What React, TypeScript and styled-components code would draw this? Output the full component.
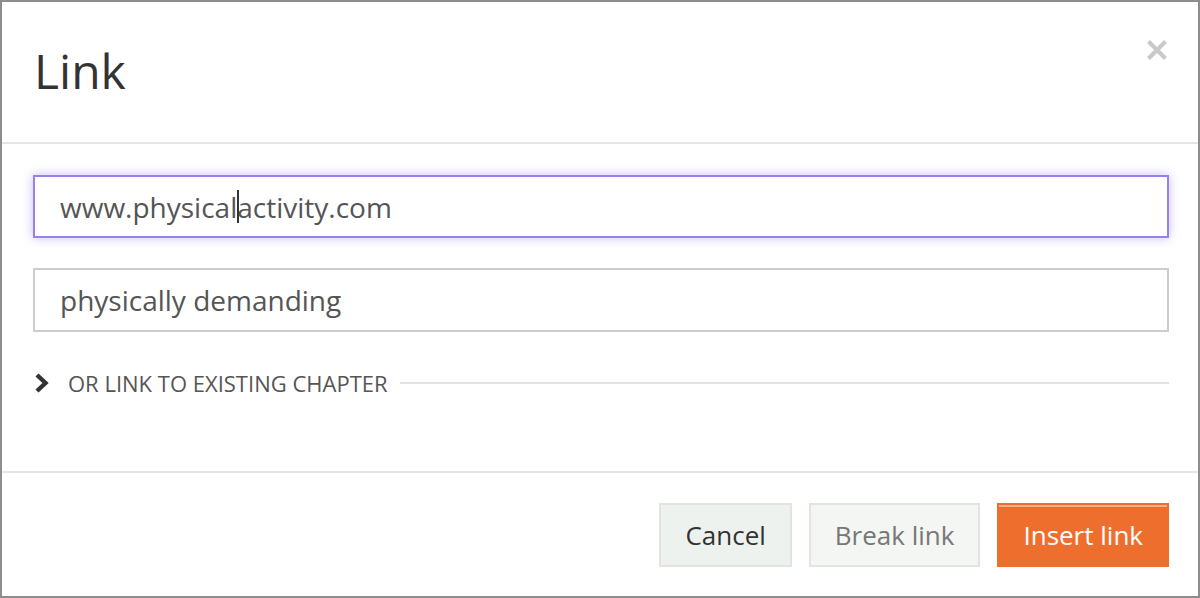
import React from "react";
import styled, { createGlobalStyle } from "styled-components";

const Global = createGlobalStyle`
  html, body { margin: 0; padding: 0; background: #8d8d8d; }
  body { font-family: "Open Sans", "Liberation Sans", sans-serif; }
  * { box-sizing: border-box; }
`;

const Modal = styled.div`
  margin: 2px 2px 0 2px;
  width: 1196px;
  height: 594px;
  background: #ffffff;
  display: flex;
  flex-direction: column;
`;

const Header = styled.div`
  height: 142px;
  border-bottom: 2px solid #e5e5e5;
  display: flex;
  align-items: center;
  justify-content: space-between;
  padding: 0 31px 0 32px;
`;

const Title = styled.h1`
  margin: 0;
  font-size: 48px;
  font-weight: 400;
  color: #333333;
  line-height: 1;
  padding-bottom: 2px;
`;

const Close = styled.button`
  border: none;
  background: none;
  padding: 0;
  width: 20px;
  height: 20px;
  align-self: flex-start;
  margin-top: 38px;
  cursor: pointer;
  display: flex;
`;

const Body = styled.div`
  flex: 1;
  padding: 31px 29px 0 31px;
  display: flex;
  flex-direction: column;
`;

const FieldWrap = styled.div`
  position: relative;
  margin-bottom: 30px;
`;

const Caret = styled.span`
  position: absolute;
  left: 204px;
  top: 15px;
  width: 2px;
  height: 33px;
  background: #333333;
  pointer-events: none;
`;

const Field = styled.input<{ $focused?: boolean }>`
  display: block;
  width: 100%;
  height: ${(p) => (p.$focused ? "63px" : "64px")};
  border: 2px solid ${(p) => (p.$focused ? "#9a80ee" : "#cccccc")};
  box-shadow: ${(p) => (p.$focused ? "0 0 10px rgba(140, 110, 240, 0.45)" : "none")};
  outline: none;
  padding: 0 25px;
  font-family: "Open Sans", "Liberation Sans", sans-serif;
  font-size: 28px;
  color: #555555;
  background: #fff;
  caret-color: transparent;
`;

const Toggle = styled.div`
  display: flex;
  align-items: center;
  gap: 18px;
  margin-top: 6px;
  padding-left: 1px;
`;

const ToggleLabel = styled.span`
  font-size: 22px;
  color: #555555;
  text-transform: uppercase;
  white-space: nowrap;
`;

const Rule = styled.div`
  flex: 1;
  height: 2px;
  background: #e2e2e2;
  margin-left: -6px;
`;

const Footer = styled.div`
  height: 125px;
  border-top: 2px solid #e5e5e5;
  display: flex;
  justify-content: flex-end;
  align-items: flex-start;
  padding: 30px 29px 0 0;
  gap: 17px;
`;

const Btn = styled.button<{ $variant: "default" | "muted" | "primary" }>`
  height: 64px;
  padding: 0 24px;
  font-family: "Open Sans", "Liberation Sans", sans-serif;
  font-size: 26px;
  cursor: pointer;
  border: 2px solid
    ${(p) => (p.$variant === "primary" ? "#ee6e2e" : "#e2e4e2")};
  background: ${(p) =>
    p.$variant === "primary" ? "#ee6e2e" : p.$variant === "muted" ? "#f3f6f3" : "#eef2ee"};
  color: ${(p) =>
    p.$variant === "primary" ? "#ffffff" : p.$variant === "muted" ? "#777777" : "#333333"};
  box-shadow: ${(p) =>
    p.$variant === "primary" ? "inset 0 2px 0 rgba(255,255,255,0.45)" : "none"};
`;

export default function App() {
  return (
    <>
      <Global />
      <Modal>
        <Header>
          <Title>Link</Title>
          <Close aria-label="Close">
            <svg width="20" height="20" viewBox="0 0 20 20">
              <path d="M3 3 L17 17 M17 3 L3 17" stroke="#c9c9c9" strokeWidth="4.2" strokeLinecap="square" />
            </svg>
          </Close>
        </Header>
        <Body>
          <FieldWrap>
            <Field $focused defaultValue="www.physicalactivity.com" />
            <Caret />
          </FieldWrap>
          <FieldWrap>
            <Field defaultValue="physically demanding" />
          </FieldWrap>
          <Toggle>
            <svg width="16" height="22" viewBox="0 0 16 22">
              <path d="M3 3 L11.5 11 L3 19" stroke="#333" strokeWidth="4.4" fill="none" />
            </svg>
            <ToggleLabel>Or link to existing chapter</ToggleLabel>
            <Rule />
          </Toggle>
        </Body>
        <Footer>
          <Btn $variant="default">Cancel</Btn>
          <Btn $variant="muted">Break link</Btn>
          <Btn $variant="primary">Insert link</Btn>
        </Footer>
      </Modal>
    </>
  );
}
